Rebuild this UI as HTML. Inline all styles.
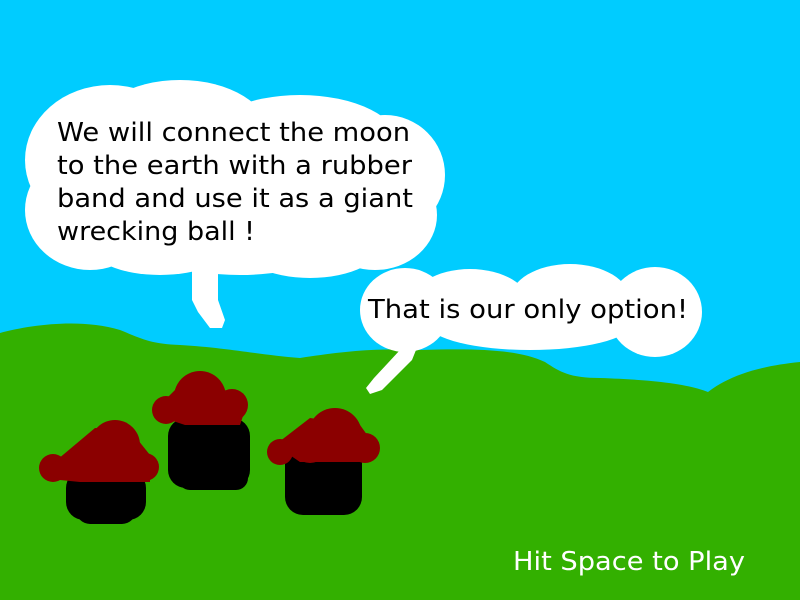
<!DOCTYPE html>
<html><head><style>html,body{margin:0;padding:0;width:800px;height:600px;overflow:hidden;background:#00ccff}
svg{display:block}
text{font-family:"DejaVu Sans","Liberation Sans",sans-serif}</style></head><body>
<svg width="800" height="600" viewBox="0 0 800 600">
<rect width="800" height="600" fill="#00ccff"/>
<path d="M0 333 C30 325 80 318 120 330 C140 338 150 344 180 345 C230 348 260 355 300 358 C340 352 370 348 420 350 C480 348 520 350 545 362 C560 372 570 378 600 378 C660 380 690 385 708 392 C730 375 760 366 800 362 L800 600 L0 600 Z" fill="#33b000"/>
<g fill="#fff">
<ellipse cx="110" cy="160" rx="85" ry="75"/>
<ellipse cx="90" cy="210" rx="65" ry="60"/>
<ellipse cx="180" cy="135" rx="90" ry="55"/>
<ellipse cx="300" cy="145" rx="100" ry="50"/>
<ellipse cx="385" cy="175" rx="60" ry="60"/>
<ellipse cx="375" cy="215" rx="62" ry="55"/>
<ellipse cx="240" cy="230" rx="110" ry="45"/>
<ellipse cx="310" cy="240" rx="75" ry="38"/>
<ellipse cx="160" cy="245" rx="70" ry="30"/>
<rect x="60" y="120" width="320" height="120"/>
<path d="M192 270 L218 270 L218 300 L225 320 L222 328 L210 328 L198 312 L192 300 Z"/>
<ellipse cx="405" cy="310" rx="45" ry="42"/>
<ellipse cx="470" cy="305" rx="60" ry="36"/>
<ellipse cx="570" cy="300" rx="60" ry="36"/>
<ellipse cx="655" cy="312" rx="47" ry="45"/>
<ellipse cx="530" cy="325" rx="100" ry="25"/>
<path d="M405 345 L416 350 L412 360 L382 390 L370 394 L366 388 L374 378 L400 350 Z"/>
</g>
<g fill="#000">
<rect x="66" y="470" width="80" height="50" rx="18"/>
<rect x="76" y="490" width="60" height="34" rx="14"/>
<rect x="168" y="418" width="82" height="70" rx="18"/>
<rect x="178" y="450" width="70" height="40" rx="12"/>
<rect x="285" y="440" width="77" height="75" rx="18"/>
<rect x="292" y="470" width="60" height="45" rx="14"/>
</g>
<g fill="#8b0000">
<circle cx="53" cy="468" r="14"/><circle cx="145" cy="467" r="14"/>
<circle cx="115" cy="445" r="25"/><circle cx="100" cy="455" r="22"/>
<path d="M45 470 L95 428 L130 430 L150 455 L150 482 L80 482 L60 480 Z"/>
<circle cx="200" cy="397" r="26"/><circle cx="166" cy="410" r="14"/><circle cx="232" cy="405" r="16"/>
<path d="M155 410 L180 385 L225 390 L245 410 L240 425 L185 425 L170 420 Z"/>
<circle cx="280" cy="452" r="13"/><circle cx="335" cy="435" r="27"/><circle cx="365" cy="448" r="15"/><circle cx="310" cy="445" r="18"/>
<path d="M275 445 L310 418 L360 425 L378 450 L370 462 L300 462 Z"/>
</g>
<g font-size="26" fill="#000">
<text x="57" y="141" textLength="353" lengthAdjust="spacingAndGlyphs">We will connect the moon</text>
<text x="57" y="174" textLength="355" lengthAdjust="spacingAndGlyphs">to the earth with a rubber</text>
<text x="57" y="207" textLength="356" lengthAdjust="spacingAndGlyphs">band and use it as a giant</text>
<text x="57" y="240" textLength="198" lengthAdjust="spacingAndGlyphs">wrecking ball !</text>
<text x="368" y="318" textLength="320" lengthAdjust="spacingAndGlyphs">That is our only option!</text>
</g>
<text x="513" y="570" font-size="26" fill="#fff" textLength="232" lengthAdjust="spacingAndGlyphs">Hit Space to Play</text>
</svg>
</body></html>
